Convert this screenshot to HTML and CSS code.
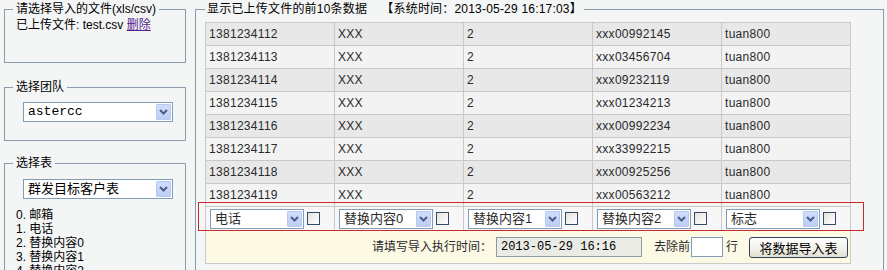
FILE: index.html
```html
<!DOCTYPE html>
<html lang="zh-CN">
<head>
    <meta charset="UTF-8">
    <title>数据导入</title>
    <link rel="stylesheet" href="styles.css">
</head>
<body>
  <div class="page">

    <div class="side">
      <fieldset class="box box-upload">
        <legend>请选择导入的文件(xls/csv)</legend>
        <div class="upload-info">已上传文件: test.csv <a href="#" class="del-link">删除</a></div>
      </fieldset>

      <fieldset class="box box-team">
        <legend>选择团队</legend>
        <div class="combo combo-wide">
          <span class="combo-text mono">astercc</span>
          <span class="combo-btn"><svg width="9" height="6" viewBox="0 0 9 6"><path d="M1 1 L4.5 4.5 L8 1" fill="none" stroke="#4a5e86" stroke-width="2"/></svg></span>
        </div>
      </fieldset>

      <fieldset class="box box-table">
        <legend>选择表</legend>
        <div class="combo combo-wide">
          <span class="combo-text">群发目标客户表</span>
          <span class="combo-btn"><svg width="9" height="6" viewBox="0 0 9 6"><path d="M1 1 L4.5 4.5 L8 1" fill="none" stroke="#4a5e86" stroke-width="2"/></svg></span>
        </div>
        <ul class="field-list">
          <li>0. 邮箱</li>
          <li>1. 电话</li>
          <li>2. 替换内容0</li>
          <li>3. 替换内容1</li>
          <li>4. 替换内容2</li>
        </ul>
      </fieldset>
    </div>

    <fieldset class="box main">
      <legend>显示已上传文件的前10条数据 &nbsp; &nbsp;【系统时间：2013-05-29 16:17:03】</legend>
      <div class="grid-wrap">
        <table class="grid">
          <tr class="data"><td>1381234112</td><td>XXX</td><td>2</td><td>xxx00992145</td><td>tuan800</td></tr>
          <tr class="data"><td>1381234113</td><td>XXX</td><td>2</td><td>xxx03456704</td><td>tuan800</td></tr>
          <tr class="data"><td>1381234114</td><td>XXX</td><td>2</td><td>xxx09232119</td><td>tuan800</td></tr>
          <tr class="data"><td>1381234115</td><td>XXX</td><td>2</td><td>xxx01234213</td><td>tuan800</td></tr>
          <tr class="data"><td>1381234116</td><td>XXX</td><td>2</td><td>xxx00992234</td><td>tuan800</td></tr>
          <tr class="data"><td>1381234117</td><td>XXX</td><td>2</td><td>xxx33992215</td><td>tuan800</td></tr>
          <tr class="data"><td>1381234118</td><td>XXX</td><td>2</td><td>xxx00925256</td><td>tuan800</td></tr>
          <tr class="data"><td>1381234119</td><td>XXX</td><td>2</td><td>xxx00563212</td><td>tuan800</td></tr>
          <tr class="map-row">
            <td><div class="map-cell"><div class="combo combo-map"><span class="combo-text">电话</span><span class="combo-btn"><svg width="9" height="6" viewBox="0 0 9 6"><path d="M1 1 L4.5 4.5 L8 1" fill="none" stroke="#4a5e86" stroke-width="2"/></svg></span></div><span class="check"></span></div></td>
            <td><div class="map-cell"><div class="combo combo-map"><span class="combo-text">替换内容0</span><span class="combo-btn"><svg width="9" height="6" viewBox="0 0 9 6"><path d="M1 1 L4.5 4.5 L8 1" fill="none" stroke="#4a5e86" stroke-width="2"/></svg></span></div><span class="check"></span></div></td>
            <td><div class="map-cell"><div class="combo combo-map"><span class="combo-text">替换内容1</span><span class="combo-btn"><svg width="9" height="6" viewBox="0 0 9 6"><path d="M1 1 L4.5 4.5 L8 1" fill="none" stroke="#4a5e86" stroke-width="2"/></svg></span></div><span class="check"></span></div></td>
            <td><div class="map-cell"><div class="combo combo-map"><span class="combo-text">替换内容2</span><span class="combo-btn"><svg width="9" height="6" viewBox="0 0 9 6"><path d="M1 1 L4.5 4.5 L8 1" fill="none" stroke="#4a5e86" stroke-width="2"/></svg></span></div><span class="check"></span></div></td>
            <td><div class="map-cell"><div class="combo combo-map"><span class="combo-text">标志</span><span class="combo-btn"><svg width="9" height="6" viewBox="0 0 9 6"><path d="M1 1 L4.5 4.5 L8 1" fill="none" stroke="#4a5e86" stroke-width="2"/></svg></span></div><span class="check"></span></div></td>
          </tr>
          <tr class="foot-row">
            <td colspan="5">
              <div class="foot">
                <span>请填写导入执行时间：</span>
                <input type="text" class="time-input" value="2013-05-29 16:16" readonly>
                <span class="skip-label">去除前</span>
                <input type="text" class="skip-input">
                <span class="row-label">行</span>
                <button type="button" class="btn-import">将数据导入表</button>
              </div>
            </td>
          </tr>
        </table>
        <!-- red highlight round the field mapping row -->
        <div class="map-mark"></div>
      </div>
    </fieldset>

  </div>
</body>
</html>
```

FILE: styles.css
```css
body {
    margin: 0;
    background: #f4f5f5;
    font-family: "Liberation Sans", "Noto Sans CJK SC", sans-serif;
    font-size: 12px;
    line-height: 14px;
    color: #000;
    overflow: hidden;
}

.mono {
    font-family: "Liberation Mono", "Noto Sans CJK SC", monospace;
    font-size: 12px;
}

.page {
    display: flex;
    gap: 9px;
    padding: 2px 3px 0 4px;
}

.side {
    width: 182px;
    flex: none;
    display: flex;
    flex-direction: column;
}

/* fieldsets */
.box {
    margin: 0;
    min-width: 0;
    border: 1px solid #8b9bab;
    padding: 0 11px;
}

.box legend {
    padding: 0 3px;
    margin-left: -3px;
}

.box-upload {
    padding-top: 2px;
}

.upload-info {
    height: 44px;
}

.del-link {
    color: #551a8b;
}

.box-team {
    margin-top: 17px;
    padding-top: 8px;
    padding-bottom: 18px;
}

.box-table {
    margin-top: 15px;
    padding-top: 9px;
    padding-bottom: 20px;
}

.field-list {
    list-style: none;
    margin: 9px 0 0;
    padding: 0;
}

/* combo boxes (XP style select) */
.combo {
    display: flex;
    align-items: center;
    box-sizing: border-box;
    height: 20px;
    border: 1px solid #7f9db9;
    background: #fff;
}

.combo-text {
    flex: 1;
    padding-left: 4px;
    font-size: 13px;
    white-space: nowrap;
    overflow: hidden;
}

.combo-btn {
    width: 15px;
    height: 16px;
    margin: 0 1px;
    box-sizing: border-box;
    border: 1px solid #b9c9ee;
    border-radius: 1px;
    background: linear-gradient(#d0ddfc, #bccdf7);
    display: flex;
    align-items: center;
    justify-content: center;
}

.combo-wide {
    width: 150px;
    margin-left: 7px;
}

.combo-map {
    width: 94px;
}

.check {
    width: 13px;
    height: 13px;
    box-sizing: border-box;
    border: 1px solid #33496b;
    background: linear-gradient(135deg, #e3e3dc, #fff);
}

/* right panel */
.main {
    flex: 1;
    padding: 6px 9px 20px;
}

.main legend {
    padding: 0 2px;
    margin-left: 0;
    letter-spacing: 0.2px;
}

.grid-wrap {
    position: relative;
}

.grid {
    width: 646px;
    border-collapse: collapse;
    table-layout: fixed;
}

.grid td {
    border: 1px solid #c9c9c9;
    padding: 0 3px;
    color: #2a2a2a;
    white-space: nowrap;
}

.data td {
    height: 22px;
    letter-spacing: 0.3px;
}

.data:nth-child(odd) {
    background: #e8e8e8;
}

.data:nth-child(even) {
    background: #f3f3f3;
}

.map-row td {
    height: 23px;
    padding: 0 4px;
    background: #f7f7f7;
}

.map-cell {
    display: flex;
    align-items: center;
    gap: 3px;
}

.foot-row td {
    height: 32px;
    padding: 0 2px;
    background: #fcf9e5;
}

.foot {
    display: flex;
    justify-content: flex-end;
    align-items: center;
}

.time-input {
    width: 146px;
    height: 20px;
    box-sizing: border-box;
    margin: 0 0 0 4px;
    padding: 0 4px;
    border: 1px solid #8d9aa8;
    background: #ebebe6;
    font-family: "Liberation Mono", monospace;
    font-size: 12px;
    color: #000;
}

.skip-label {
    margin-left: 12px;
}

.skip-input {
    width: 32px;
    height: 20px;
    box-sizing: border-box;
    margin: 0 0 0 1px;
    border: 1px solid #7f9db9;
    background: #fff;
}

.row-label {
    margin-left: 3px;
}

.btn-import {
    margin-left: 11px;
    width: 99px;
    height: 21px;
    padding: 0;
    border: 1px solid #34435a;
    border-radius: 3px;
    background: linear-gradient(#ffffff, #f0efe8 60%, #e2dfd2);
    font-family: "Liberation Sans", "Noto Sans CJK SC", sans-serif;
    font-size: 13px;
    color: #000;
}

.map-mark {
    position: absolute;
    left: -7px;
    top: 180px;
    width: 666px;
    height: 29px;
    box-sizing: border-box;
    border: 1px solid #c62a2f;
    pointer-events: none;
}
```
